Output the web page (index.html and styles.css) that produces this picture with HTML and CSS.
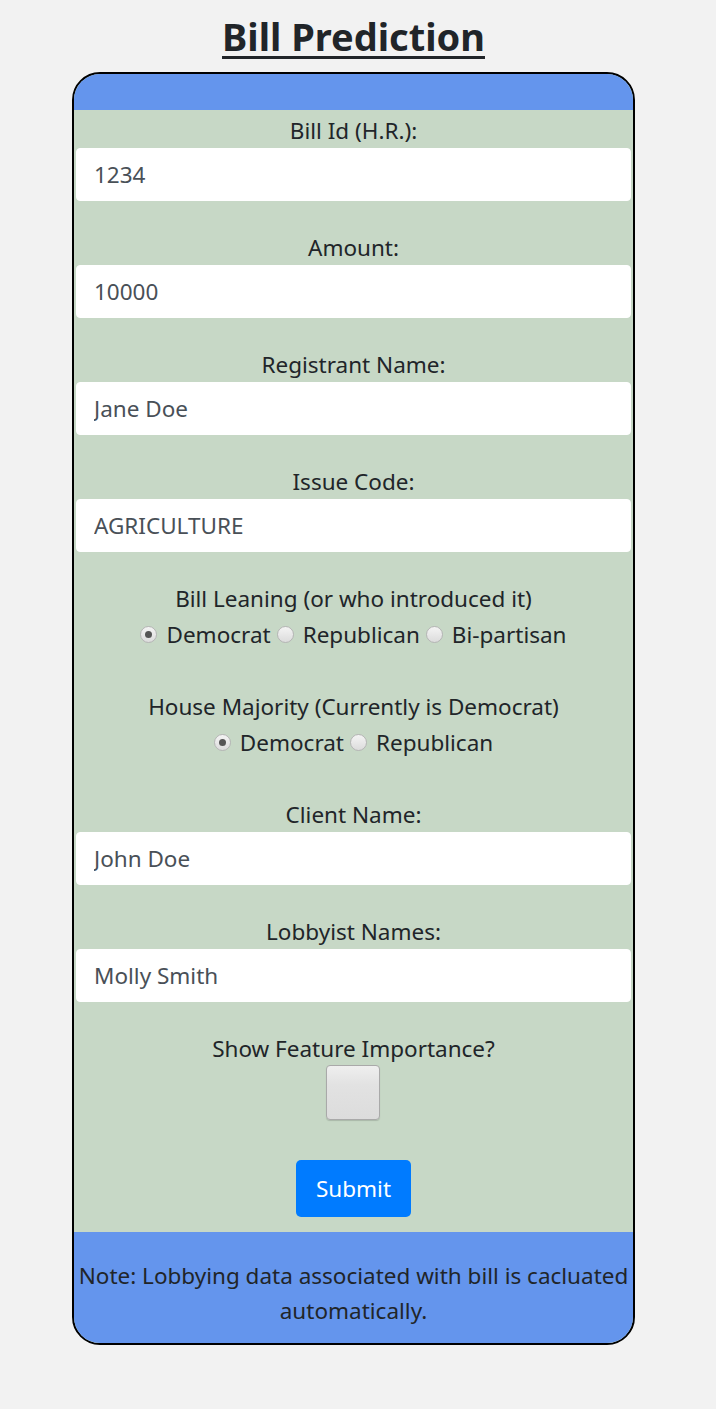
FILE: index.html
```html
<!DOCTYPE html>
<html>
<head>
<meta charset="utf-8">
<link rel="stylesheet" href="styles.css">
</head>
<body>
<div class="page">
  <h1 class="title">Bill Prediction</h1>
  <form class="card">
    <div class="card-head"></div>
    <div class="card-body">
      <div class="field">
        <label class="label">Bill Id (H.R.):</label>
        <input class="input" type="text" value="1234">
      </div>
      <div class="field">
        <label class="label">Amount:</label>
        <input class="input" type="text" value="10000">
      </div>
      <div class="field">
        <label class="label">Registrant Name:</label>
        <input class="input" type="text" value="Jane Doe">
      </div>
      <div class="field">
        <label class="label">Issue Code:</label>
        <input class="input" type="text" value="AGRICULTURE">
      </div>
      <div class="group">
        <div class="label">Bill Leaning (or who introduced it)</div>
        <div class="radios">
          <label class="opt"><input class="radio" type="radio" name="lean" checked>Democrat</label>
          <label class="opt"><input class="radio" type="radio" name="lean">Republican</label>
          <label class="opt"><input class="radio" type="radio" name="lean">Bi-partisan</label>
        </div>
      </div>
      <div class="group">
        <div class="label">House Majority (Currently is Democrat)</div>
        <div class="radios">
          <label class="opt"><input class="radio" type="radio" name="house" checked>Democrat</label>
          <label class="opt"><input class="radio" type="radio" name="house">Republican</label>
        </div>
      </div>
      <div class="field">
        <label class="label">Client Name:</label>
        <input class="input" type="text" value="John Doe">
      </div>
      <div class="field">
        <label class="label">Lobbyist Names:</label>
        <input class="input" type="text" value="Molly Smith">
      </div>
      <div class="check-group">
        <div class="label">Show Feature Importance?</div>
        <input class="check" type="checkbox">
      </div>
      <div class="actions">
        <button class="submit" type="button">Submit</button>
      </div>
    </div>
    <div class="card-foot">Note: Lobbying data associated with bill is cacluated automatically.</div>
  </form>
</div>
</body>
</html>
```
FILE: styles.css
```css
html, body {
  margin: 0;
  padding: 0;
  background: #f2f2f2;
}
body {
  font-family: "Noto Sans", "Open Sans", sans-serif;
  color: #212529;
  font-size: 22.5px;
  line-height: 33px;
}
.page {
  padding: 0 9px 66px 0;
}
.title {
  margin: 10px 0 0;
  text-align: center;
  font-size: 38px;
  line-height: 52px;
  font-weight: 700;
  text-decoration: underline;
  text-underline-offset: 5px;
  text-decoration-thickness: 3px;
}
.card {
  width: 563px;
  box-sizing: border-box;
  margin: 10px auto 0;
  border: 2px solid #000;
  border-radius: 28px;
  overflow: hidden;
  background: #c7d8c6;
}
.card-head {
  height: 36px;
  background: #6495ed;
}
.card-body {
  padding: 4px 2px 15px;
  text-align: center;
}
.field {
  display: flex;
  flex-direction: column;
  margin-bottom: 30px;
}
.label {
  display: block;
  text-align: center;
  margin-bottom: 1px;
}
.input {
  height: 53px;
  box-sizing: border-box;
  border: 1px solid #fff;
  border-radius: 4px;
  background: #fff;
  padding: 0 17px;
  font: inherit;
  color: #495057;
  outline: none;
}
.group {
  margin-bottom: 39px;
}
.group .label {
  margin-bottom: 3px;
}
.radios {
  display: flex;
  justify-content: center;
  align-items: center;
  gap: 6px;
}
.opt {
  display: inline-flex;
  align-items: center;
}
.radio {
  appearance: none;
  -webkit-appearance: none;
  width: 17px;
  height: 17px;
  margin: 0 9px 0 0;
  border-radius: 50%;
  border: 1px solid #b5b5b5;
  background: linear-gradient(#f4f4f4, #dcdcdc);
  box-sizing: border-box;
  position: relative;
}
.radio:checked::after {
  content: "";
  position: absolute;
  left: 4px;
  top: 4px;
  width: 7px;
  height: 7px;
  border-radius: 50%;
  background: #555;
}
.check-group {
  display: flex;
  flex-direction: column;
  align-items: center;
  margin-bottom: 40px;
}
.check-group .label {
  margin-bottom: 0;
}
.check {
  appearance: none;
  -webkit-appearance: none;
  width: 54px;
  height: 55px;
  margin: 0 2px 0 0;
  border: 1px solid #a9a9a9;
  border-radius: 4px;
  background: linear-gradient(#efefef 0%, #e2e2e2 35%, #dcdcdc 100%);
  box-shadow: 0 1px 1px rgba(0,0,0,0.15);
  box-sizing: border-box;
}
.actions {
  display: flex;
  justify-content: center;
}
.submit {
  font: inherit;
  color: #fff;
  background: #007bff;
  border: 0;
  border-radius: 5px;
  width: 115px;
  height: 57px;
  padding: 0;
}
.card-foot {
  background: #6495ed;
  text-align: center;
  padding: 26px 0 0;
  line-height: 35px;
  height: 111px;
  box-sizing: border-box;
}
```
